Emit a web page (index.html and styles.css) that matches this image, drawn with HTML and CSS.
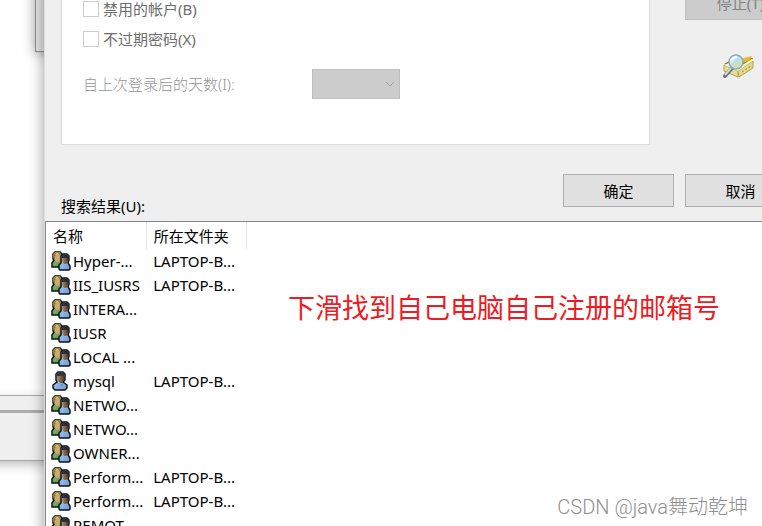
FILE: index.html
```
<!DOCTYPE html>
<html lang="zh-CN">
<head>
<meta charset="utf-8">
<title>选择用户</title>
<link rel="stylesheet" href="styles.css">
</head>
<body>
<svg class="defs" aria-hidden="true">
  <defs>
    <linearGradient id="green" x1="0" y1="0" x2="1" y2="1"><stop offset="0" stop-color="#a5c97a"/><stop offset="1" stop-color="#568a3c"/></linearGradient>
    <linearGradient id="blue" x1="0" y1="0" x2="1" y2="1"><stop offset="0" stop-color="#b4d2f2"/><stop offset="1" stop-color="#6b9cd6"/></linearGradient>
    <linearGradient id="skin" x1="0" y1="0" x2="1" y2="0"><stop offset="0" stop-color="#b98a5e"/><stop offset="1" stop-color="#4e3a2c"/></linearGradient>
    <linearGradient id="lens" x1="0" y1="0" x2="1" y2="1"><stop offset="0" stop-color="#f2fbff"/><stop offset=".5" stop-color="#b7dcf5"/><stop offset="1" stop-color="#dfe8b8"/></linearGradient>
    <symbol id="group" viewBox="0 0 20 20">
      <path d="M1 16v-4l2-3-1-1V3l2-2h5l2 2v6l1 2v5z" fill="url(#green)" stroke="#0c140b" stroke-width="1.5"/>
      <path d="M3 5l2-2h3l1 2v3L8 11H6L3 8z" fill="#cfa871"/>
      <path d="M2 7V3l2-2h5l1 2v1L7 3 4 5v3z" fill="#94793a"/>
      <path d="M4 3l2-1h2L5 4z" fill="#f3e39a"/>
      <path d="M8 18v-4l2-2V5l2-2h4l2 2v4l-1 3 2 3v3l-1 1H9z" fill="url(#blue)" stroke="#0c1220" stroke-width="1.5"/>
      <path d="M11 6h6v4l-2 3h-2l-2-3z" fill="url(#skin)"/>
      <path d="M11 7V5l1-2h4l2 2v5l-2-3z" fill="#2b2f35"/>
    </symbol>
    <symbol id="user" viewBox="0 0 20 20">
      <path d="M2 17v-3l4-3-1-2V3l2-2h5l2 2v6l-2 2 4 3v3l-2 2H4z" fill="url(#blue)" stroke="#0c1220" stroke-width="1.5"/>
      <path d="M6 4h7v5l-2 3H9L6 9z" fill="url(#skin)"/>
      <path d="M5 5V3l2-2h5l2 2v6l-2-4H7z" fill="#34383c"/>
      <path d="M8 12l2 2 2-2-1 4z" fill="#5682b5"/>
    </symbol>
  </defs>
</svg>

<div class="back-window back-top"></div>
<div class="back-window back-bottom"></div>

<main class="dialog">
  <section class="query">
    <form class="panel">
      <label class="check"><input type="checkbox" disabled>禁用的帐户(B)</label>
      <label class="check"><input type="checkbox" disabled>不过期密码(X)</label>
      <div class="days">
        <label for="days">自上次登录后的天数(I):</label>
        <div class="select-wrap">
          <select id="days" disabled><option></option></select>
          <svg class="chevron" viewBox="0 0 10 6" aria-hidden="true"><path d="M1 1l4 4 4-4" fill="none" stroke="#a0a0a0"/></svg>
        </div>
      </div>
    </form>
    <div class="side">
      <button class="btn" type="button" disabled>停止(T)</button>
      <svg class="search-icon" viewBox="0 0 34 26" aria-hidden="true">
        <path d="M2 11l9-5 20-1-1 3-13 9z" fill="#8a7420"/>
        <path d="M18 6l12-3-2 4-9 4z" fill="#e6b92c"/>
        <path d="M2 12l14 6v6L2 18z" fill="#e9e08f" stroke="#b5a551"/>
        <path d="M16 18L31 8v7L17 24z" fill="#e3d988" stroke="#b5a551"/>
        <path d="M2 12l5-2 10 4 13-8 2 1-16 11z" fill="#fbf7cb"/>
        <path d="M20 19l9-6" stroke="#8b8048" stroke-dasharray="2 2"/>
        <path d="M10 15l-7 8" stroke="#6b7078" stroke-width="4" stroke-linecap="round"/>
        <path d="M9 15l-6 7" stroke="#d4d7dc" stroke-width="2"/>
        <circle cx="14" cy="9" r="7" fill="url(#lens)" stroke="#8fa9c0" stroke-width="1.5"/>
        <path d="M9 8q2-4 6-4" fill="none" stroke="#fff" stroke-width="2"/>
        <path d="M9 11l10-3v3l-4 3-4-1z" fill="#d9dc9d" opacity=".8"/>
      </svg>
    </div>
  </section>

  <section class="actions">
    <h2 class="caption" id="results">搜索结果(U):</h2>
    <div class="buttons">
      <button class="btn" type="button">确定</button>
      <button class="btn" type="button">取消</button>
    </div>
  </section>

  <section class="list">
    <table aria-labelledby="results">
      <thead><tr><th>名称</th><th>所在文件夹</th></tr></thead>
      <tbody>
        <tr><td><svg class="icon"><use href="#group"/></svg>Hyper-...</td><td>LAPTOP-B...</td></tr>
        <tr><td><svg class="icon"><use href="#group"/></svg>IIS_IUSRS</td><td>LAPTOP-B...</td></tr>
        <tr><td><svg class="icon"><use href="#group"/></svg>INTERA...</td><td></td></tr>
        <tr><td><svg class="icon"><use href="#group"/></svg>IUSR</td><td></td></tr>
        <tr><td><svg class="icon"><use href="#group"/></svg>LOCAL ...</td><td></td></tr>
        <tr><td><svg class="icon"><use href="#user"/></svg>mysql</td><td>LAPTOP-B...</td></tr>
        <tr><td><svg class="icon"><use href="#group"/></svg>NETWO...</td><td></td></tr>
        <tr><td><svg class="icon"><use href="#group"/></svg>NETWO...</td><td></td></tr>
        <tr><td><svg class="icon"><use href="#group"/></svg>OWNER...</td><td></td></tr>
        <tr><td><svg class="icon"><use href="#group"/></svg>Perform...</td><td>LAPTOP-B...</td></tr>
        <tr><td><svg class="icon"><use href="#group"/></svg>Perform...</td><td>LAPTOP-B...</td></tr>
        <tr><td><svg class="icon"><use href="#group"/></svg>REMOT...</td><td></td></tr>
      </tbody>
    </table>
    <p class="note">下滑找到自己电脑自己注册的邮箱号</p>
  </section>
</main>
<div class="watermark">CSDN @java舞动乾坤</div>
</body>
</html>
```
FILE: styles.css
```
* {
  box-sizing: border-box;
}

body {
  position: relative;
  height: 100vh;
  margin: 0;
  overflow: hidden;
  background: #fff;
  color: #000;
  font: 15px/20px "Noto Sans", "Noto Sans CJK SC", sans-serif;
}

.defs {
  position: absolute;
  width: 0;
  height: 0;
}

/* Windows behind the dialog */
.back-window {
  position: absolute;
  background: #efefef;
  box-shadow: 0 2px 12px rgba(0, 0, 0, 0.35);
}

.back-top {
  top: -20px;
  left: 35px;
  width: 60px;
  height: 72px;
  border: 1px solid #8c8c8c;
  background: #e4e4e4;
}

.back-bottom {
  top: 395px;
  left: -20px;
  width: 100px;
  height: 66px;
  border: 1px solid #a8a8a8;
  box-shadow: 0 4px 10px rgba(0, 0, 0, 0.25);
}

.back-bottom::before {
  content: "";
  display: block;
  height: 3px;
  margin-top: 14px;
  background: #adadad;
}

/* The dialog runs past the top, right and bottom of the desktop */
.dialog {
  position: absolute;
  top: -14px;
  right: -50px;
  bottom: -20px;
  left: 44px;
  display: flex;
  flex-direction: column;
  border-left: 1px solid #dcdcdc;
  background: #efefef;
  box-shadow: 0 0 14px rgba(0, 0, 0, 0.4);
}

.query {
  display: flex;
  gap: 35px;
  padding: 0 16px;
}

.panel {
  flex: 1;
  padding: 8px 21px 45px;
  border: 1px solid #dcdcdc;
  border-top: 0;
  background: #fff;
}

.check {
  display: flex;
  align-items: center;
  gap: 4px;
  height: 30px;
  color: #6d6d6d;
}

.check input {
  appearance: none;
  width: 16px;
  height: 16px;
  margin: 0;
  border: 1px solid #ccc;
  background: #fff;
}

.days {
  display: flex;
  align-items: center;
  margin-top: 15px;
  color: #969696;
  font-weight: 300;
}

.days label {
  width: 229px;
}

.select-wrap {
  position: relative;
  width: 88px;
}

.select-wrap select {
  display: block;
  appearance: none;
  width: 100%;
  height: 30px;
  border: 1px solid #bfbfbf;
  border-radius: 0;
  background: #ccc;
  opacity: 1;
}

.chevron {
  position: absolute;
  top: 12px;
  right: 5px;
  width: 10px;
  height: 6px;
}

.side {
  width: 111px;
}

.btn {
  display: block;
  width: 111px;
  height: 33px;
  padding: 0;
  border: 1px solid #adadad;
  background: #e1e1e1;
  color: #000;
  font: inherit;
}

.btn:disabled {
  height: 34px;
  border-color: #bfbfbf;
  background: #ccc;
  color: #838383;
}

.search-icon {
  display: block;
  width: 34px;
  height: 26px;
  margin: 33px 0 0 37px;
}

.actions {
  display: flex;
  align-items: flex-end;
  justify-content: space-between;
  padding: 29px 16px 5px;
}

.caption {
  margin: 0;
  font: inherit;
}

.buttons {
  display: flex;
  gap: 11px;
  padding-bottom: 9px;
}

.list {
  display: flex;
  flex: 1;
  align-items: flex-start;
  gap: 41px;
  overflow: hidden;
  border: 1px solid #828790;
  background: #fff;
}

table {
  width: 201px;
  flex: none;
  border-collapse: collapse;
  table-layout: fixed;
}

th,
td {
  height: 24px;
  padding: 0 0 0 7px;
  font-weight: 400;
  text-align: left;
  white-space: nowrap;
}

th {
  height: 27px;
  border-right: 1px solid #e5e5e5;
}

td:first-child {
  padding-left: 5px;
}

.icon {
  width: 20px;
  height: 20px;
  margin-right: 2px;
  vertical-align: top;
}

.note {
  margin: 66px 0 0;
  color: #ed1c24;
  font-size: 27px;
  line-height: 40px;
  white-space: nowrap;
}

.watermark {
  position: absolute;
  right: 14px;
  bottom: 5px;
  color: #8f8f8f;
  font: 300 20px/28px Roboto, "Noto Sans CJK SC", sans-serif;
}
```
